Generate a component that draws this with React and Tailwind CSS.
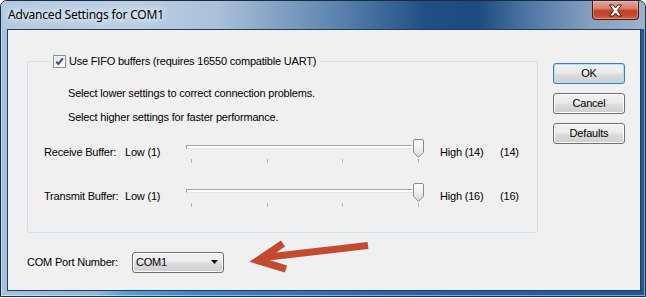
import React from 'react';

const sans = "font-['Liberation_Sans',Arial,sans-serif]";

function WinButton({ label, isDefault }) {
  return (
    <button
      className={
        'w-[72px] h-[21px] rounded-[3px] border text-[11px] leading-[13px] text-black bg-[linear-gradient(180deg,#f2f2f2_0%,#ebebeb_48%,#dddddd_52%,#cfcfcf_100%)] ' +
        (isDefault
          ? 'border-[#3c7fb1] shadow-[inset_0_0_0_1px_#a6e2f8]'
          : 'border-[#707070] shadow-[inset_0_0_0_1px_#fbfbfb]')
      }
    >
      {label}
    </button>
  );
}

function Checkbox() {
  return (
    <div className="w-[13px] h-[13px] border border-[#8e8f8f] bg-[linear-gradient(135deg,#dcdcdc_0%,#f6f6f6_60%,#ffffff_100%)] shadow-[inset_0_0_0_1px_#f4f4f4] flex items-center justify-center">
      <svg width="11" height="11" viewBox="0 0 11 11">
        <path d="M2.2 5.6 L4.4 8 L8.8 2.4" fill="none" stroke="#3d5287" strokeWidth="2.1" />
      </svg>
    </div>
  );
}

function Slider() {
  return (
    <div className="relative w-[240px] h-[24px] -mt-[7px]">
      <div className="mt-[6px] h-[4px] border-t border-l border-[#a5a5a5] border-b border-b-[#e6e6e6] bg-white mr-[14px]" />
      <div className="mt-[10px] h-[4px] flex justify-between pl-[5px] pr-[7px]">
        <div className="w-px h-full bg-[#b8b8b8]" />
        <div className="w-px h-full bg-[#b8b8b8]" />
        <div className="w-px h-full bg-[#b8b8b8]" />
        <div className="w-px h-full bg-[#b8b8b8]" />
      </div>
      <svg className="absolute left-[227px] top-0" width="11" height="19" viewBox="0 0 11 19">
        <defs>
          <linearGradient id="thumbFill" x1="0" y1="0" x2="0" y2="1">
            <stop offset="0" stopColor="#fdfdfd" />
            <stop offset="0.5" stopColor="#f0f0f0" />
            <stop offset="1" stopColor="#d6d6d6" />
          </linearGradient>
        </defs>
        <path
          d="M2 0.5 H9 Q10.5 0.5 10.5 2 V13.3 L5.5 18.3 L0.5 13.3 V2 Q0.5 0.5 2 0.5 Z"
          fill="url(#thumbFill)"
          stroke="#8a8a8a"
        />
      </svg>
    </div>
  );
}

function BufferRow({ label, high, value, className }) {
  return (
    <div className={'flex items-start h-[13px] pl-[16px] ' + className}>
      <span className="w-[81px]">{label}</span>
      <span className="w-[61px]">Low (1)</span>
      <Slider />
      <span className="w-[60px] ml-[14px]">{high}</span>
      <span>{value}</span>
    </div>
  );
}

export default function App() {
  return (
    <div className={'relative w-[646px] h-[298px] bg-white text-black ' + sans}>
      <div className="w-[646px] h-[297px] rounded-t-[7px] border border-[#1b2b40] bg-[linear-gradient(90deg,#a4c2e0_0%,#8fb6dc_15%,#58a0d8_19%,#3f86c6_30%,#2c65a8_60%,#22569a_100%)] shadow-[inset_0_0_0_1px_rgba(255,255,255,0.45)] flex flex-col overflow-hidden">
        <div className="h-[28px] flex items-start justify-between bg-[linear-gradient(90deg,#b3c9e0_0%,#bcd0e5_20%,#a8c0d9_34%,#5c84ae_52%,#1f4f86_66%,#1c4b82_74%,#4f77a3_82%,#86a2c1_92%,#9cb3cb_100%)]">
          <span className="ml-[7px] mt-[6px] text-[12px] leading-[16px] font-['Noto_Sans',sans-serif] tracking-[-0.2px] text-black [text-shadow:0_0_6px_#ffffff,0_0_10px_#ffffff]">
            Advanced Settings for COM1
          </span>
          <div className="mr-[6px] w-[47px] h-[19px] rounded-b-[4px] border border-t-0 border-[#4a1c14] bg-[linear-gradient(180deg,#e6a595_0%,#d7826f_40%,#c23e22_55%,#c9482c_80%,#d8664a_100%)] shadow-[inset_0_0_0_1px_rgba(255,220,210,0.35)] flex items-center justify-center">
            <svg width="15" height="13" viewBox="0 0 15 13">
              <path
                d="M1.5 1 H5.2 L7.5 3.9 L9.8 1 H13.5 L9.4 6.5 L13.5 12 H9.8 L7.5 9.1 L5.2 12 H1.5 L5.6 6.5 Z"
                fill="#ffffff"
                stroke="#3a1812"
                strokeWidth="1"
                strokeLinejoin="round"
              />
            </svg>
          </div>
        </div>

        <div className="flex-1 ml-[6px] mr-[4px] mb-[5px] border border-[#263c56] bg-[#f0f0f0] flex flex-col text-[11px] leading-[13px] tracking-[-0.2px]">
          <div className="flex">
            <div className="ml-[19px] mt-[31px] w-[511px] h-[172px] border border-[#d5dfe5] rounded-[3px] flex flex-col">
              <div className="-mt-[7px] ml-[22px] px-[3px] w-fit h-[13px] bg-[#f0f0f0] flex items-center gap-[3px]">
                <Checkbox />
                <span>Use FIFO buffers (requires 16550 compatible UART)</span>
              </div>
              <p className="mt-[19px] pl-[40px]">Select lower settings to correct connection problems.</p>
              <p className="mt-[11px] pl-[40px]">Select higher settings for faster performance.</p>
              <BufferRow className="mt-[22px]" label="Receive Buffer:" high="High (14)" value="(14)" />
              <BufferRow className="mt-[31px]" label="Transmit Buffer:" high="High (16)" value="(16)" />
            </div>
            <div className="ml-[15px] mt-[33px] flex flex-col gap-[9px]">
              <WinButton label="OK" isDefault />
              <WinButton label="Cancel" />
              <WinButton label="Defaults" />
            </div>
          </div>

          <div className="ml-[19px] mt-[19px] flex items-center">
            <span className="w-[105px]">COM Port Number:</span>
            <div className="w-[92px] h-[21px] rounded-[3px] border border-[#707070] shadow-[inset_0_0_0_1px_#fbfbfb] bg-[linear-gradient(180deg,#f2f2f2_0%,#ebebeb_48%,#dddddd_52%,#cfcfcf_100%)] flex items-center justify-between pl-[3px] pr-[4px]">
              <span>COM1</span>
              <svg width="8" height="5" viewBox="0 0 8 5">
                <path d="M0 0 H7 L3.5 4 Z" fill="#000000" />
              </svg>
            </div>
          </div>
        </div>
      </div>

      <svg className="absolute left-0 top-0 pointer-events-none" width="646" height="298" viewBox="0 0 646 298">
        <line x1="368" y1="245.5" x2="264" y2="257.5" stroke="#c24a30" strokeWidth="7" />
        <polyline
          points="283,243.5 258,260.5 286,269"
          fill="none"
          stroke="#c24a30"
          strokeWidth="7.5"
          strokeLinejoin="miter"
          strokeMiterlimit="6"
        />
      </svg>
    </div>
  );
}
